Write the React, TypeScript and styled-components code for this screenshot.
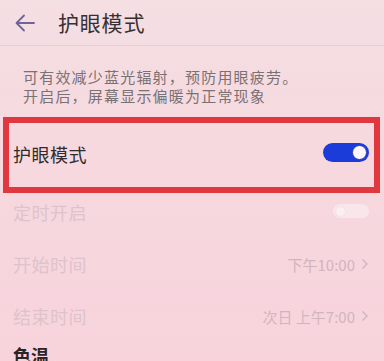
import React from "react";
import styled, { createGlobalStyle } from "styled-components";

const Global = createGlobalStyle`
  html, body { margin: 0; padding: 0; }
  body {
    width: 384px;
    height: 361px;
    overflow: hidden;
    font-family: "Noto Sans CJK SC", "Noto Sans", sans-serif;
  }
`;

const Screen = styled.div`
  width: 384px;
  height: 361px;
  overflow: hidden;
  background: linear-gradient(180deg, #f4dfe3 0%, #f6d9df 40%, #f8d3dc 100%);
  display: flex;
  flex-direction: column;
  & > * { flex: none; }
`;

const Header = styled.div`
  height: 45px;
  display: flex;
  align-items: center;
  padding-left: 15px;
  border-bottom: 1px solid #e4cfd4;
  gap: 23px;
`;

const Title = styled.div`
  font-size: 21px;
  color: #363033;
  letter-spacing: 0.8px;
  line-height: 1;
  margin-top: -1px;
`;

const Desc = styled.div`
  padding: 21px 0 12px 23px;
  font-size: 15px;
  letter-spacing: 1.2px;
  line-height: 19px;
  color: #7a7174;
`;

const Highlight = styled.div`
  box-sizing: border-box;
  height: 76px;
  margin: 0 4px 0 3px;
  border: 6px solid #e0383e;
  display: flex;
  align-items: center;
  justify-content: space-between;
  padding: 0 5px 2px 4px;
`;

const MainLabel = styled.div`
  font-size: 18px;
  color: #2f2a2d;
  letter-spacing: 0.5px;
`;

const Toggle = styled.div<{ $on?: boolean }>`
  box-sizing: border-box;
  width: ${(p) => (p.$on ? 46 : 36)}px;
  height: ${(p) => (p.$on ? 19 : 14)}px;
  border-radius: 10px;
  background: ${(p) => (p.$on ? "#1b3cd8" : "#f9e6ea")};
  display: flex;
  align-items: center;
  justify-content: ${(p) => (p.$on ? "flex-end" : "flex-start")};
  padding: 0 2px;
  margin-top: ${(p) => (p.$on ? -4 : -2)}px;
`;

const Knob = styled.div<{ $on?: boolean }>`
  box-sizing: border-box;
  width: ${(p) => (p.$on ? 15 : 11)}px;
  height: ${(p) => (p.$on ? 15 : 11)}px;
  border-radius: 50%;
  background: ${(p) => (p.$on ? "#fbf7fb" : "#fbeff2")};
  border: 1px solid ${(p) => (p.$on ? "#2a3fa8" : "#f3e1e5")};
`;

const List = styled.div`
  margin-top: -7px;
  display: flex;
  flex-direction: column;
`;

const Row = styled.div`
  height: 52px;
  flex: none;
  display: flex;
  align-items: center;
  justify-content: space-between;
  padding: 0 15px 0 13px;
`;

const RowLabel = styled.div`
  font-size: 18px;
  color: #dec3ca;
  letter-spacing: 0.5px;
`;

const Value = styled.div`
  font-size: 15px;
  color: #d2b4bd;
  display: flex;
  align-items: center;
  gap: 6px;
`;

const SectionTitle = styled.div`
  padding: 0 0 0 13px;
  font-size: 18px;
  font-weight: 700;
  color: #2a2427;
`;

const Chevron = () => (
  <svg width="8" height="12" viewBox="0 0 8 12">
    <path d="M1.5 1.5 L6 6 L1.5 10.5" fill="none" stroke="#d2b4bd" strokeWidth="1.4" />
  </svg>
);

const BackArrow = () => (
  <svg width="20" height="18" viewBox="0 0 20 18">
    <path
      d="M19 9 H2 M9 1.5 L1.5 9 L9 16.5"
      fill="none"
      stroke="#6e6496"
      strokeWidth="1.8"
      strokeLinecap="round"
      strokeLinejoin="round"
    />
  </svg>
);

export default function App() {
  return (
    <>
      <Global />
      <Screen>
        <Header>
          <BackArrow />
          <Title>护眼模式</Title>
        </Header>
        <Desc>
          可有效减少蓝光辐射，预防用眼疲劳。
          <br />
          开启后，屏幕显示偏暖为正常现象
        </Desc>
        <Highlight>
          <MainLabel>护眼模式</MainLabel>
          <Toggle $on>
            <Knob $on />
          </Toggle>
        </Highlight>
        <List>
          <Row>
            <RowLabel>定时开启</RowLabel>
            <Toggle>
              <Knob />
            </Toggle>
          </Row>
          <Row>
            <RowLabel>开始时间</RowLabel>
            <Value>
              下午10:00
              <Chevron />
            </Value>
          </Row>
          <Row>
            <RowLabel>结束时间</RowLabel>
            <Value>
              次日 上午7:00
              <Chevron />
            </Value>
          </Row>
          <SectionTitle>色温</SectionTitle>
        </List>
      </Screen>
    </>
  );
}
